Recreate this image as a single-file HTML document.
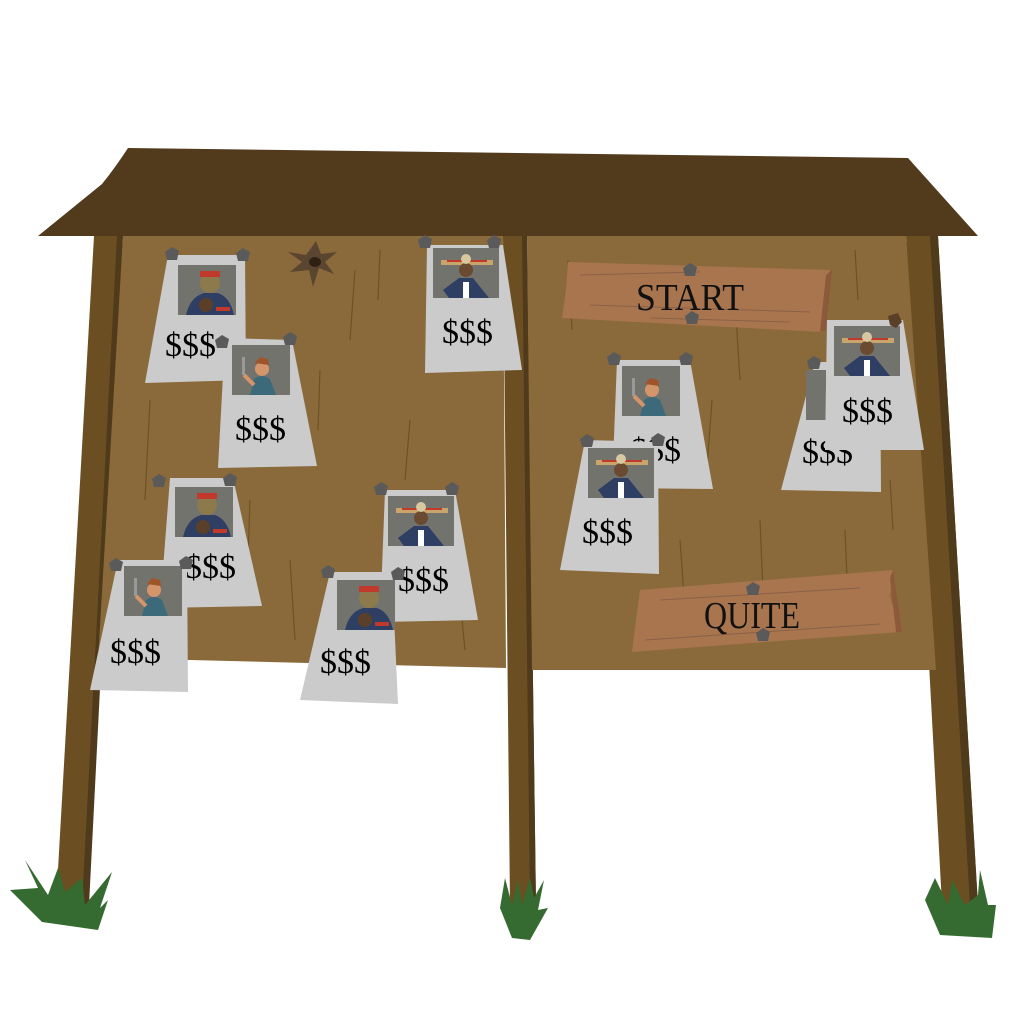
<!DOCTYPE html>
<html><head><meta charset="utf-8"><style>
html,body{margin:0;padding:0;background:#fff;width:1024px;height:1024px;overflow:hidden}
svg{display:block}
.d{font-family:"Liberation Serif",serif;font-size:34px;fill:#000}
.s{font-family:"Liberation Serif",serif;font-size:38px;fill:#111}
</style></head><body>
<svg width="1024" height="1024" viewBox="0 0 1024 1024" xmlns="http://www.w3.org/2000/svg">
<defs>
<g id="pin"><polygon points="-7,-3 0,-8 7,-4 5,5 -5,5" fill="#5a5a5a"/></g>
<g id="man1">
 <rect x="0" y="0" width="58" height="50" fill="#73736e"/>
 <path d="M8,50 Q12,32 26,28 L40,28 Q52,32 56,50Z" fill="#2f3e63"/>
 <circle cx="32" cy="18" r="10" fill="#8c7a4c"/>
 <rect x="22" y="6" width="20" height="6" fill="#c0392b"/>
 <circle cx="28" cy="40" r="7" fill="#5a4028"/>
 <rect x="38" y="42" width="14" height="4" fill="#c0392b"/>
</g>
<g id="man2">
 <rect x="0" y="0" width="58" height="50" fill="#73736e"/>
 <path d="M18,50 L22,34 Q30,28 38,34 L44,50Z" fill="#3c6a7a"/>
 <circle cx="30" cy="24" r="7" fill="#d4956a"/>
 <path d="M23,18 L28,12 L36,14 L37,20Z" fill="#a0542a"/>
 <rect x="10" y="12" width="3" height="18" fill="#999"/>
 <path d="M12,30 L22,40" stroke="#d4956a" stroke-width="4"/>
</g>
<g id="man3">
 <rect x="0" y="0" width="66" height="50" fill="#73736e"/>
 <path d="M10,42 L26,30 L40,30 L56,50 L16,50Z" fill="#2f3e63"/>
 <rect x="30" y="34" width="6" height="16" fill="#fff"/>
 <rect x="8" y="12" width="52" height="5" fill="#c9a56b"/>
 <rect x="14" y="12" width="40" height="2" fill="#c0392b"/>
 <circle cx="33" cy="22" r="7" fill="#6a4a30"/>
 <circle cx="33" cy="11" r="5" fill="#d8c8a0"/>
</g>
</defs>

<polygon points="94,236 123,236 88,905 56,905" fill="#6b4f22"/>
<polygon points="117,236 123,236 89,905 82,905" fill="#4f3a1b"/>
<polygon points="503,236 527,236 536,905 510,905" fill="#6b4f22"/>
<polygon points="522,236 527,236 536,905 530,905" fill="#4f3a1b"/>
<polygon points="906,236 938,236 978,905 942,905" fill="#6b4f22"/>
<polygon points="930,236 938,236 978,905 970,905" fill="#4f3a1b"/>

<polygon points="123,236 503,236 506,668 190,660 98,660" fill="#8a6a3a"/>
<polygon points="527,236 906,236 936,670 532,670" fill="#8a6a3a"/>
<g stroke="#6d5127" stroke-width="1.2" fill="none">
<path d="M150,400 L145,500"/><path d="M355,270 L350,340"/><path d="M410,420 L405,480"/>
<path d="M320,370 L318,430"/><path d="M290,560 L295,640"/><path d="M460,600 L465,650"/>
<path d="M568,260 L572,330"/><path d="M735,300 L740,380"/><path d="M712,400 L706,480"/>
<path d="M760,520 L765,640"/><path d="M845,530 L848,600"/><path d="M890,480 L893,530"/>
<path d="M610,480 L612,560"/><path d="M680,540 L685,610"/><path d="M855,250 L858,300"/>
<path d="M250,500 L248,560"/><path d="M380,250 L378,300"/>
</g>

<path d="M38,236 L102,184 Q115,168 128,148 L908,158 L978,236Z" fill="#523a1d"/>

<polygon points="316,241 321,254 337,252 325,262 334,274 319,268 313,287 309,270 290,272 302,262 288,252 306,255" fill="#5a4530"/>
<ellipse cx="315" cy="262" rx="6" ry="5" fill="#2e2114"/>

<polygon points="168,255 245,255 246,380 145,383" fill="#cbcbcb"/>
<g transform="translate(178,265)"><use href="#man1"/></g>
<text class="d" x="165" y="356">$$$</text>
<use href="#pin" x="172" y="255"/><use href="#pin" x="243" y="256"/>

<polygon points="225,338 292,340 317,466 218,468" fill="#cbcbcb"/>
<g transform="translate(232,345)"><use href="#man2"/></g>
<text class="d" x="235" y="440">$$$</text>
<use href="#pin" x="222" y="343"/><use href="#pin" x="290" y="340"/>

<polygon points="427,245 503,245 522,370 425,373" fill="#cbcbcb"/>
<g transform="translate(433,248)"><use href="#man3"/></g>
<text class="d" x="442" y="343">$$$</text>
<use href="#pin" x="425" y="243"/><use href="#pin" x="494" y="243"/>

<polygon points="170,478 233,478 262,606 160,608" fill="#cbcbcb"/>
<g transform="translate(175,487)"><use href="#man1"/></g>
<text class="d" x="185" y="578">$$$</text>
<use href="#pin" x="159" y="482"/><use href="#pin" x="230" y="481"/>

<polygon points="118,560 187,560 188,692 90,690" fill="#cbcbcb"/>
<g transform="translate(124,566)"><use href="#man2"/></g>
<text class="d" x="110" y="663">$$$</text>
<use href="#pin" x="116" y="566"/><use href="#pin" x="186" y="564"/>

<polygon points="385,490 455,490 478,620 380,622" fill="#cbcbcb"/>
<g transform="translate(388,496)"><use href="#man3"/></g>
<text class="d" x="398" y="591">$$$</text>
<use href="#pin" x="381" y="490"/><use href="#pin" x="452" y="490"/>

<polygon points="330,572 392,572 398,704 300,700" fill="#cbcbcb"/>
<g transform="translate(337,580)"><use href="#man1"/></g>
<text class="d" x="320" y="673">$$$</text>
<use href="#pin" x="328" y="573"/><use href="#pin" x="398" y="575"/>

<polygon points="568,262 830,270 826,288 822,332 562,318 566,290" fill="#a8754f"/>
<polygon points="826,275 832,270 826,330 820,332" fill="#8c5a3b"/>
<g stroke="#8c6048" stroke-width="1"><path d="M580,275 L700,272"/><path d="M590,305 L810,312"/><path d="M650,318 L790,322"/></g>
<text class="s" x="636" y="310" textLength="108" lengthAdjust="spacingAndGlyphs">START</text>
<use href="#pin" x="690" y="271"/><use href="#pin" x="692" y="319"/>

<polygon points="617,360 690,360 713,489 612,488" fill="#cbcbcb"/>
<g transform="translate(622,366)"><use href="#man2"/></g>
<text class="d" x="630" y="461">$$$</text>
<use href="#pin" x="614" y="360"/><use href="#pin" x="686" y="360"/>

<polygon points="585,440 658,442 659,574 560,570" fill="#cbcbcb"/>
<g transform="translate(588,448)"><use href="#man3"/></g>
<text class="d" x="582" y="543">$$$</text>
<use href="#pin" x="587" y="442"/><use href="#pin" x="658" y="441"/>

<polygon points="815,362 880,362 881,492 781,490" fill="#cbcbcb"/>
<rect x="806" y="370" width="20" height="50" fill="#73736e"/>
<text class="d" x="802" y="463">$$$</text>
<use href="#pin" x="814" y="364"/>

<polygon points="827,320 903,320 924,450 825,450" fill="#cbcbcb"/>
<g transform="translate(834,326)"><use href="#man3"/></g>
<text class="d" x="842" y="422">$$$</text>
<polygon points="888,316 898,313 902,322 896,328 890,325" fill="#5a4028"/>

<polygon points="640,590 893,570 890,596 900,632 632,652 636,620" fill="#a8754f"/>
<polygon points="890,578 893,570 902,632 896,632" fill="#8c5a3b"/>
<g stroke="#8c6048" stroke-width="1"><path d="M660,600 L860,588"/><path d="M645,640 L880,624"/></g>
<text class="s" x="704" y="628" textLength="96" lengthAdjust="spacingAndGlyphs">QUITE</text>
<use href="#pin" x="753" y="590"/><use href="#pin" x="763" y="636"/>

<polygon points="10,890 38,888 25,860 48,895 58,868 65,892 82,878 85,905 112,872 100,908 108,900 98,930 42,922" fill="#356b30"/>
<polygon points="500,908 505,878 512,905 518,880 522,905 530,878 534,898 544,880 538,910 548,908 530,940 512,938" fill="#356b30"/>
<polygon points="925,900 935,878 948,905 952,880 965,905 978,895 980,870 988,905 996,905 992,938 940,935" fill="#356b30"/>
</svg>
</body></html>
